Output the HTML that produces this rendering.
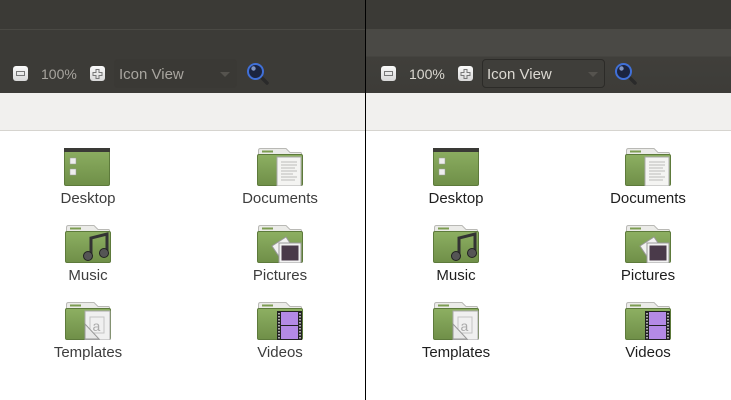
<!DOCTYPE html>
<html><head><meta charset="utf-8"><style>
*{margin:0;padding:0;box-sizing:border-box}
body{width:731px;height:400px;overflow:hidden;background:#fff;font-family:"Liberation Sans",sans-serif;position:relative}
.pane{position:absolute;top:0;width:365px;height:400px;overflow:hidden;background:#fff}
.top{position:absolute;left:0;top:0;width:100%;height:29px;background:#3b3a36}
.tb{position:absolute;left:0;top:29px;width:100%;height:64px;background:#3c3b37;border-top:1px solid #4a4944}
.loc{position:absolute;left:0;top:93px;width:100%;height:38px;background:#f1f0ee;border-bottom:1px solid #d6d4cf}
.btn{position:absolute;top:66px;width:15px;height:15px;border-radius:3px;background:linear-gradient(#fafafa,#d8d8d8)}
.btn svg{position:absolute;left:0;top:0}
.zoom{position:absolute;left:41px;top:66px;font-size:14px;color:#a8a59f}
.combo{position:absolute;left:114px;top:59px;width:123px;height:29px;border:1px solid #363531;border-radius:4px;background:#3a3935}
.combo span{position:absolute;left:4px;top:6px;font-size:15px;color:#a8a59f}
.combo i{position:absolute;right:6px;top:12px;border:5px solid transparent;border-top:5px solid #55534e;border-bottom:0}
.srch{position:absolute;left:246px;top:62px}
.ic{position:absolute;width:46px;height:38px}
.lb{position:absolute;width:140px;text-align:center;font-size:15px;color:#3d3d3d}
.r .lb{color:#1e1e1e}
.r .tb{background:linear-gradient(#4a4945 0,#4a4945 26px,#403f3b 27px,#3d3c38 100%)}
.r .zoom,.r .combo span{color:#dcd9d2}
.r .combo{border-color:#2c2b28;background:#3f3e3a}
</style></head><body>
<svg width="0" height="0" style="position:absolute">
<defs>
<linearGradient id="g" x1="0" y1="0" x2="0" y2="1"><stop offset="0" stop-color="#8daf62"/><stop offset="1" stop-color="#6f8f48"/></linearGradient>
<symbol id="f" viewBox="0 0 46 38">
<path d="M1.5 7V2.5Q1.5 .5 3.5 .5H29l4 4h10.5Q44.5 4.5 44.5 6V7Z" fill="#ebebe8" stroke="#b9b9b5"/>
<rect x="5" y="2.5" width="11" height="2" fill="#7d9d52"/>
<rect x=".5" y="6.5" width="45" height="31" rx="1.5" fill="url(#g)" stroke="#5d7a3b"/>
</symbol>
<symbol id="mag" viewBox="0 0 24 24">
<path d="M14 14l7 7" stroke="#2a2a2a" stroke-width="3.5" stroke-linecap="round"/>
<circle cx="9.5" cy="9.5" r="7.5" fill="#1b2440" stroke="#4070d8" stroke-width="2"/>
<circle cx="7.5" cy="6.5" r="2.2" fill="#9ab0e0" opacity=".8"/>
</symbol>
</defs></svg>

<div class="pane" style="left:0">
<div class="top"></div><div class="tb"></div><div class="loc"></div>
<div class="btn" style="left:13px"><svg width="15" height="15"><rect x="3.5" y="5.5" width="8" height="4" fill="none" stroke="#777"/></svg></div>
<div class="zoom">100%</div>
<div class="btn" style="left:90px"><svg width="15" height="15"><path d="M6 3.5h3v3h3v3H9v3H6v-3H3v-3h3z" fill="none" stroke="#777"/></svg></div>
<div class="combo" style="border-color:#3a3935"><span>Icon View</span><i></i></div>
<svg class="srch" width="24" height="24"><use href="#mag"/></svg>

<svg class="ic" style="left:64px;top:148px" viewBox="0 0 46 38"><rect x=".5" y=".5" width="45" height="37" rx="1.5" fill="url(#g)" stroke="#5d7a3b"/><rect x="0" y="0" width="46" height="4" fill="#3a3a36"/><rect x="6" y="10" width="6" height="6" fill="#eee" stroke="#999" stroke-width=".5"/><rect x="6" y="21" width="6" height="6" fill="#eee" stroke="#999" stroke-width=".5"/></svg>
<div class="lb" style="left:18px;top:190px">Desktop</div>
<svg class="ic" style="left:257px;top:148px"><use href="#f"/><rect x="20" y="9" width="24" height="29" fill="#f4f4f2" stroke="#aaa"/><path d="M24 14h16M24 17h16M24 20h14M24 23h16M24 26h12M24 29h16M24 32h14" stroke="#bbb"/></svg>
<div class="lb" style="left:210px;top:190px">Documents</div>
<svg class="ic" style="left:65px;top:225px"><use href="#f"/><path d="M26 30V13l16-4v18" fill="none" stroke="#333" stroke-width="3"/><circle cx="23" cy="31" r="4.5" fill="#555" stroke="#222"/><circle cx="39" cy="28" r="4.5" fill="#555" stroke="#222"/></svg>
<div class="lb" style="left:18px;top:267px">Music</div>
<svg class="ic" style="left:257px;top:225px"><use href="#f"/><path d="M15 21l14-9 10 15-14 9z" fill="#f2f2f2" stroke="#999"/><rect x="22" y="18" width="22" height="20" fill="#f2f2f2" stroke="#999"/><rect x="24.5" y="20.5" width="17" height="15" fill="#4a3a4a"/></svg>
<div class="lb" style="left:210px;top:267px">Pictures</div>
<svg class="ic" style="left:65px;top:302px"><use href="#f"/><rect x="20" y="9" width="25" height="29" fill="#f0f0f0" stroke="#aaa"/><rect x="25" y="15" width="14" height="16" fill="none" stroke="#c4c4c4"/><text x="27.5" y="29" font-size="14" fill="#aaa" font-family="Liberation Sans">a</text><path d="M20 22v15h14z" fill="#e8e8e8" stroke="#999"/></svg>
<div class="lb" style="left:18px;top:344px">Templates</div>
<svg class="ic" style="left:257px;top:302px"><use href="#f"/><rect x="20" y="9" width="25" height="29" fill="#222"/><rect x="24" y="10" width="17" height="13" fill="#b48ae6"/><rect x="24" y="24" width="17" height="13" fill="#b48ae6"/><path d="M22 11v26M43 11v26" stroke="#ddd" stroke-width="1.5" stroke-dasharray="1.5 1.5"/></svg>
<div class="lb" style="left:210px;top:344px">Videos</div>
</div>

<div style="position:absolute;left:365px;top:0;width:1px;height:400px;background:#000"></div>

<div class="pane r" style="left:366px">
<div class="top"></div><div class="tb"></div><div class="loc"></div>
<div class="btn" style="left:15px"><svg width="15" height="15"><rect x="3.5" y="5.5" width="8" height="4" fill="none" stroke="#777"/></svg></div>
<div class="zoom" style="left:43px">100%</div>
<div class="btn" style="left:92px"><svg width="15" height="15"><path d="M6 3.5h3v3h3v3H9v3H6v-3H3v-3h3z" fill="none" stroke="#777"/></svg></div>
<div class="combo" style="left:116px"><span>Icon View</span><i></i></div>
<svg class="srch" style="left:248px" width="24" height="24"><use href="#mag"/></svg>

<svg class="ic" style="left:67px;top:148px" viewBox="0 0 46 38"><rect x=".5" y=".5" width="45" height="37" rx="1.5" fill="url(#g)" stroke="#5d7a3b"/><rect x="0" y="0" width="46" height="4" fill="#3a3a36"/><rect x="6" y="10" width="6" height="6" fill="#eee" stroke="#999" stroke-width=".5"/><rect x="6" y="21" width="6" height="6" fill="#eee" stroke="#999" stroke-width=".5"/></svg>
<div class="lb" style="left:20px;top:190px">Desktop</div>
<svg class="ic" style="left:259px;top:148px"><use href="#f"/><rect x="20" y="9" width="24" height="29" fill="#f4f4f2" stroke="#aaa"/><path d="M24 14h16M24 17h16M24 20h14M24 23h16M24 26h12M24 29h16M24 32h14" stroke="#bbb"/></svg>
<div class="lb" style="left:212px;top:190px">Documents</div>
<svg class="ic" style="left:67px;top:225px"><use href="#f"/><path d="M26 30V13l16-4v18" fill="none" stroke="#333" stroke-width="3"/><circle cx="23" cy="31" r="4.5" fill="#555" stroke="#222"/><circle cx="39" cy="28" r="4.5" fill="#555" stroke="#222"/></svg>
<div class="lb" style="left:20px;top:267px">Music</div>
<svg class="ic" style="left:259px;top:225px"><use href="#f"/><path d="M15 21l14-9 10 15-14 9z" fill="#f2f2f2" stroke="#999"/><rect x="22" y="18" width="22" height="20" fill="#f2f2f2" stroke="#999"/><rect x="24.5" y="20.5" width="17" height="15" fill="#4a3a4a"/></svg>
<div class="lb" style="left:212px;top:267px">Pictures</div>
<svg class="ic" style="left:67px;top:302px"><use href="#f"/><rect x="20" y="9" width="25" height="29" fill="#f0f0f0" stroke="#aaa"/><rect x="25" y="15" width="14" height="16" fill="none" stroke="#c4c4c4"/><text x="27.5" y="29" font-size="14" fill="#aaa" font-family="Liberation Sans">a</text><path d="M20 22v15h14z" fill="#e8e8e8" stroke="#999"/></svg>
<div class="lb" style="left:20px;top:344px">Templates</div>
<svg class="ic" style="left:259px;top:302px"><use href="#f"/><rect x="20" y="9" width="25" height="29" fill="#222"/><rect x="24" y="10" width="17" height="13" fill="#b48ae6"/><rect x="24" y="24" width="17" height="13" fill="#b48ae6"/><path d="M22 11v26M43 11v26" stroke="#ddd" stroke-width="1.5" stroke-dasharray="1.5 1.5"/></svg>
<div class="lb" style="left:212px;top:344px">Videos</div>
</div>
</body></html>
